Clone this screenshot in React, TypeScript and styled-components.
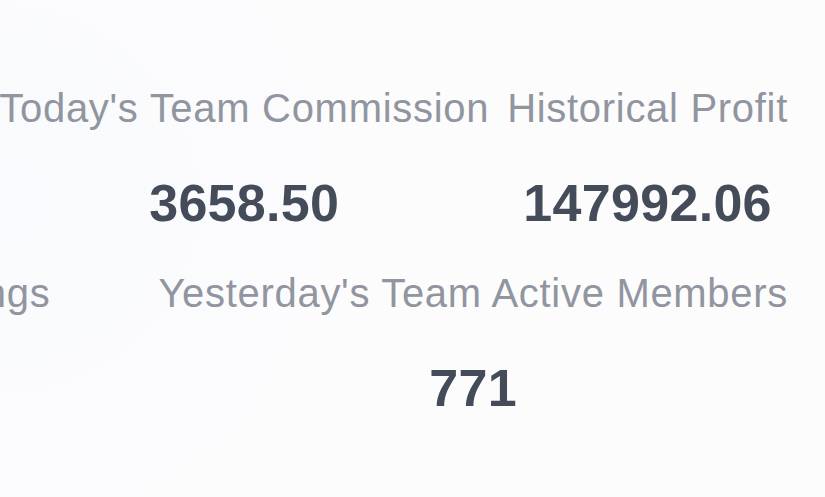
import React from 'react'
import styled, { createGlobalStyle } from 'styled-components'

const GlobalStyle = createGlobalStyle`
    html, body {
        margin: 0;
        padding: 0;
        background-color: #fcfcfd;
        overflow: hidden;
    }
`

const Board = styled.section`
    width: 825px;
    height: 497px;
    box-sizing: border-box;
    padding: 84px 37px 0 0;
    display: flex;
    flex-direction: column;
    gap: 36px;
    background: radial-gradient(circle at 0% 40%, #f9fafd 0%, #fcfcfd 45%);
    font-family: "Liberation Sans", Arial, sans-serif;
    overflow: hidden;
`

const Row = styled.div<{ $gap: number }>`
    display: flex;
    justify-content: flex-end;
    gap: ${p => p.$gap}px;
`

const Stat = styled.div`
    display: flex;
    flex-direction: column;
    align-items: center;
    gap: 41px;
    flex-shrink: 0;
`

const Label = styled.span`
    font-size: 40px;
    line-height: 48px;
    letter-spacing: 0.7px;
    color: #91959f;
    white-space: nowrap;
`

const Value = styled.span`
    font-size: 52px;
    line-height: 60px;
    font-weight: 700;
    letter-spacing: 0.3px;
    color: #454c59;
`

const rows = [
    {
        gap: 18,
        stats: [
            { label: "Today's Team Commission", value: '3658.50' },
            { label: 'Historical Profit', value: '147992.06' },
        ],
    },
    {
        gap: 108,
        stats: [
            { label: "Yesterday's Team Earnings", value: '2916.30' },
            { label: "Yesterday's Team Active Members", value: '771' },
        ],
    },
]

export default function App() {
    return (
        <>
            <GlobalStyle />
            <Board>
                {rows.map((row, i) => (
                    <Row key={i} $gap={row.gap}>
                        {row.stats.map(s => (
                            <Stat key={s.label}>
                                <Label>{s.label}</Label>
                                <Value>{s.value}</Value>
                            </Stat>
                        ))}
                    </Row>
                ))}
            </Board>
        </>
    )
}
